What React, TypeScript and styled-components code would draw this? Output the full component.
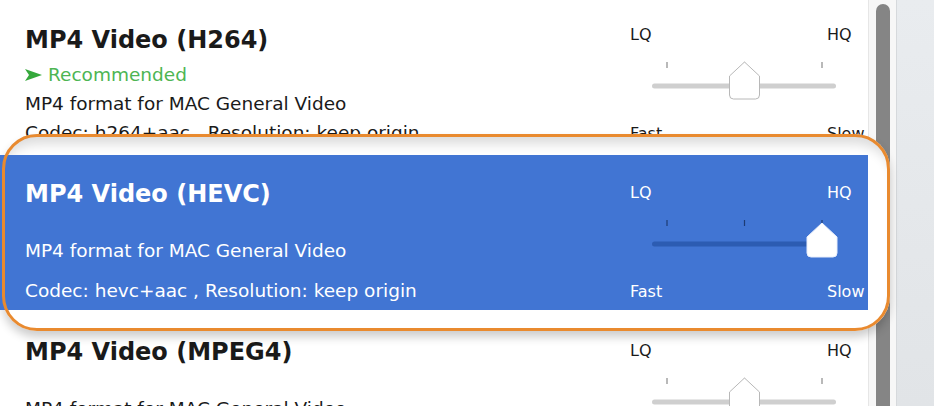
import React from "react";
import styled, { createGlobalStyle } from "styled-components";

interface Preset {
  title: string;
  codec: string;
  level: number;
  recommended?: boolean;
  selected?: boolean;
}

const presets: Preset[] = [
  { title: "MP4 Video (H264)", codec: "h264+aac", level: 1, recommended: true },
  { title: "MP4 Video (HEVC)", codec: "hevc+aac", level: 2, selected: true },
  { title: "MP4 Video (MPEG4)", codec: "mpeg4+aac", level: 1 },
];

const GlobalStyle = createGlobalStyle`
  html, body {
    margin: 0;
    padding: 0;
  }
  body {
    font-family: "DejaVu Sans", Verdana, sans-serif;
    overflow: hidden;
  }
`;

const Window = styled.div`
  position: relative;
  display: flex;
  width: 934px;
  height: 406px;
  overflow: hidden;
  background: linear-gradient(#e9ecef, #e1e4e7);
`;

const Panel = styled.div`
  width: 868px;
  flex-shrink: 0;
  background: #fff;
  overflow: hidden;
`;

const List = styled.div`
  margin-top: -3px;
`;

const Row = styled.div<{ $selected?: boolean }>`
  display: grid;
  grid-template-columns: 605px 1fr;
  height: 155px;
  margin-bottom: 3px;
  padding-left: 25px;
  background: ${(p) => (p.$selected ? "#4175d3" : "#fff")};
  color: ${(p) => (p.$selected ? "#fff" : "#1a1a1a")};
  position: ${(p) => (p.$selected ? "relative" : "static")};
  z-index: ${(p) => (p.$selected ? 2 : "auto")};
`;

const TextCol = styled.div<{ $top: number }>`
  display: flex;
  flex-direction: column;
  padding-top: ${(p) => p.$top}px;
  white-space: nowrap;
`;

const Title = styled.div`
  font-size: 24px;
  font-weight: bold;
  line-height: 30px;
`;

const Line = styled.div<{ $gap: number }>`
  font-size: 18.5px;
  line-height: 22px;
  margin-top: ${(p) => p.$gap}px;
`;

const Recommended = styled(Line)`
  display: flex;
  align-items: center;
  gap: 6px;
  color: #4db553;
`;

const RightCol = styled.div`
  display: flex;
  flex-direction: column;
  padding-top: 28px;
  white-space: nowrap;
`;

const Labels = styled.div<{ $gap?: number }>`
  display: grid;
  grid-template-columns: 197px auto;
  font-size: 16px;
  line-height: 20px;
  margin-top: ${(p) => p.$gap ?? 0}px;
`;

const SliderBox = styled.svg`
  display: block;
  margin: 12px 0 0 20px;
`;

const ScrollTrack = styled.div`
  width: 29px;
  flex-shrink: 0;
  display: flex;
  padding: 4px 6px 0 7px;
  box-sizing: border-box;
  background: #f7f7f7;
  border-left: 1px solid #e6e6e6;
  border-right: 1px solid #d6d9dc;
`;

const Thumb = styled.div`
  flex: 1;
  background: #858585;
  border-radius: 8px 8px 0 0;
`;

const Backdrop = styled.div`
  position: absolute;
  left: 2px;
  top: 134px;
  width: 888px;
  height: 197px;
  box-sizing: border-box;
  border-radius: 35px;
  background: #fff;
  z-index: 1;
  box-shadow: 0 6px 10px rgba(0, 0, 0, 0.2),
    inset 0 16px 12px -6px rgba(0, 0, 0, 0.14);
`;

const Frame = styled.div`
  position: absolute;
  left: 2px;
  top: 134px;
  width: 888px;
  height: 197px;
  box-sizing: border-box;
  border-radius: 35px;
  border: 3px solid #e98a2f;
  z-index: 3;
  pointer-events: none;
`;

function Arrow() {
  return (
    <svg width="17" height="12" viewBox="0 0 17 12">
      <path d="M0 0 L17 6 L0 12 L4 6 Z" fill="#35a83c" />
    </svg>
  );
}

function Slider({ level, selected }: { level: number; selected?: boolean }) {
  const ticks = [17, 94.5, 172];
  const cx = ticks[level];
  const tip = selected ? 8 : 5;
  const knob = `M${cx} ${tip} L${cx + 15} ${tip + 14} L${cx + 15} 38 Q${cx + 15} 42 ${cx + 11} 42 L${cx - 11} 42 Q${cx - 15} 42 ${cx - 15} 38 L${cx - 15} ${tip + 14} Z`;
  return (
    <SliderBox width="190" height="45" viewBox="0 0 190 45">
      {ticks.map((x) => (
        <line
          key={x}
          x1={x}
          x2={x}
          y1={5}
          y2={11}
          stroke={selected ? "#1d3b73" : "#8a8a8a"}
          strokeWidth={1.2}
        />
      ))}
      <rect
        x={2}
        y={26.5}
        width={184}
        height={5}
        rx={2.5}
        fill={selected ? "#2c5cb2" : "#cfcfcf"}
      />
      <path
        d={knob}
        fill="#fff"
        stroke={selected ? "#e8eefb" : "#b8b8b8"}
        strokeWidth={1}
      />
    </SliderBox>
  );
}

function PresetRow({ preset }: { preset: Preset }) {
  const { title, codec, level, recommended, selected } = preset;
  return (
    <Row $selected={selected}>
      <TextCol $top={recommended ? 28 : 24}>
        <Title>{title}</Title>
        {recommended && (
          <Recommended $gap={9}>
            <Arrow />
            Recommended
          </Recommended>
        )}
        <Line $gap={recommended ? 7 : 31}>MP4 format for MAC General Video</Line>
        <Line $gap={recommended ? 7 : 18}>
          Codec: {codec} , Resolution: keep origin
        </Line>
      </TextCol>
      <RightCol>
        <Labels>
          <span>LQ</span>
          <span>HQ</span>
        </Labels>
        <Slider level={level} selected={selected} />
        <Labels $gap={22}>
          <span>Fast</span>
          <span>Slow</span>
        </Labels>
      </RightCol>
    </Row>
  );
}

export default function App() {
  return (
    <>
      <GlobalStyle />
      <Window>
        <Panel>
          <List>
            {presets.map((p) => (
              <PresetRow key={p.title} preset={p} />
            ))}
          </List>
        </Panel>
        <ScrollTrack>
          <Thumb />
        </ScrollTrack>
        <Backdrop />
        <Frame />
      </Window>
    </>
  );
}
